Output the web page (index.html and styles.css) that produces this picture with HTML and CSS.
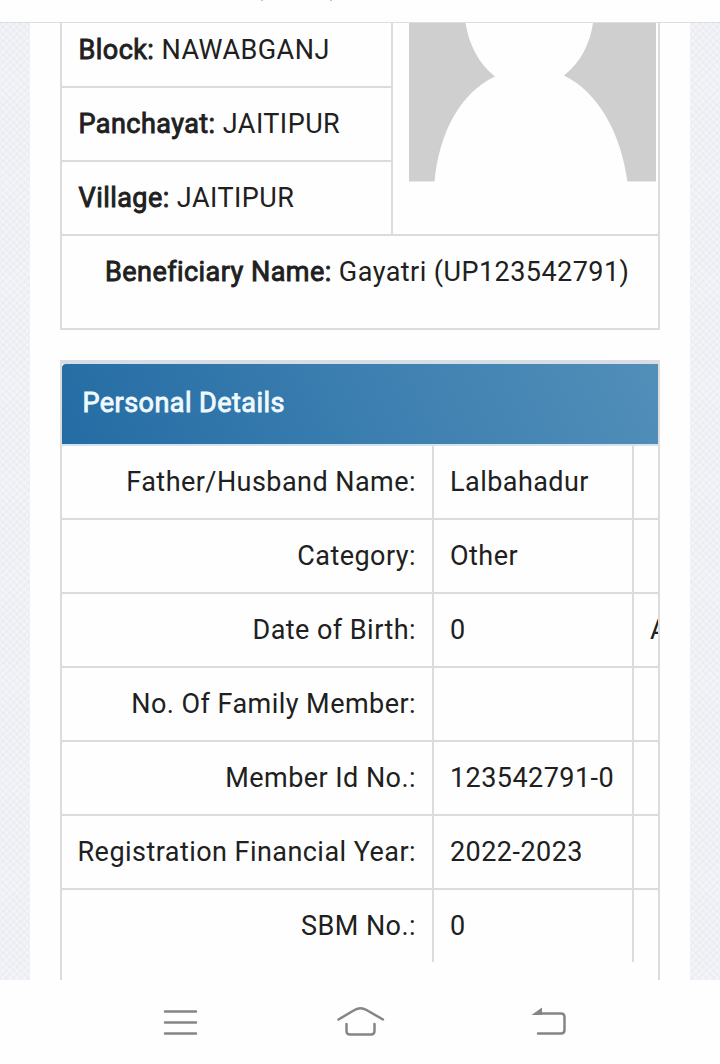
FILE: index.html
```html
<!DOCTYPE html>
<html lang="en">
<head>
<meta charset="utf-8">
<title>Beneficiary Details</title>
<link rel="stylesheet" href="styles.css">
</head>
<body>
<header class="topbar"><i class="speck"></i><i class="speck"></i></header>
<main class="page">
  <div class="sheet">
    <section class="summary">
      <div class="summary-top">
        <div class="location">
          <div class="location-row"><span><b>Block:</b> NAWABGANJ</span></div>
          <div class="location-row"><span><b>Panchayat:</b> JAITIPUR</span></div>
          <div class="location-row"><span><b>Village:</b> JAITIPUR</span></div>
        </div>
        <div class="photo">
          <svg width="247" height="159" viewBox="409 23 247 159">
            <rect x="409" y="23" width="247" height="158.500" fill="#cfcfcf"/>
            <path fill="#fefefe" d="M465.500 23C469 45 479 64 495 76.500C460 93 439 133 434.500 182H627.500C621 133 598 92 564 75.500C579 64 590 45 593 23Z"/>
          </svg>
        </div>
      </div>
      <div class="beneficiary"><span><b>Beneficiary Name:</b> Gayatri (UP123542791)</span></div>
    </section>
    <section class="details">
      <h2 class="details-head"><span>Personal Details</span></h2>
      <div class="row"><div class="label">Father/Husband Name:</div><div class="value">Lalbahadur</div><div class="extra"></div></div>
      <div class="row"><div class="label">Category:</div><div class="value">Other</div><div class="extra"></div></div>
      <div class="row"><div class="label">Date of Birth:</div><div class="value">0</div><div class="extra">A</div></div>
      <div class="row"><div class="label">No. Of Family Member:</div><div class="value"></div><div class="extra"></div></div>
      <div class="row"><div class="label">Member Id No.:</div><div class="value">123542791-0</div><div class="extra"></div></div>
      <div class="row"><div class="label">Registration Financial Year:</div><div class="value">2022-2023</div><div class="extra"></div></div>
      <div class="row"><div class="label">SBM No.:</div><div class="value">0</div><div class="extra"></div></div>
    </section>
  </div>
</main>
<nav class="navbar">
  <svg width="40" height="36" viewBox="160 1005 40 36" class="icon"><path d="M165 1011.500H196M165 1022.500H196M165 1033.500H196"/></svg>
  <svg width="56" height="36" viewBox="332 1005 56 36" class="icon"><path d="M338.500 1019.500L354.500 1010Q360.500 1006.500 366.500 1010L383 1019.500M346.500 1024V1031Q346.500 1034.500 350 1034.500H371Q374.500 1034.500 374.500 1031V1024"/></svg>
  <svg width="44" height="36" viewBox="528 1005 44 36" class="icon"><path d="M540 1013.500H561Q564.500 1013.500 564.500 1017V1030Q564.500 1033.500 561 1033.500H538"/><path class="arrow" d="M531.500 1015L542 1007.500V1015Z"/></svg>
</nav>
</body>
</html>
```
FILE: styles.css
```css
* { box-sizing: border-box; }
body {
  margin: 0;
  width: 720px;
  height: 1064px;
  overflow: hidden;
  display: flex;
  flex-direction: column;
  background: #fefefe;
  color: #202020;
  font: 27px/32px Roboto, sans-serif;
  letter-spacing: 0.45px;
}
.topbar {
  flex: none;
  height: 23px;
  padding-left: 261px;
  display: flex;
  gap: 67px;
  border-bottom: 1px solid #dedede;
}
.speck { width: 2px; height: 1px; background: #c4c4c4; }
.page {
  flex: none;
  height: 957px;
  padding: 0 30px;
  overflow: hidden;
  background:
    repeating-linear-gradient(45deg, rgba(226, 228, 236, 0.3) 0 2px, transparent 2px 5px),
    repeating-linear-gradient(-45deg, rgba(226, 228, 236, 0.3) 0 2px, transparent 2px 5px),
    #f3f4f8;
}
.sheet { height: 957px; padding: 0 30px; background: #fefefe; }
b, .details-head { font-weight: 400; -webkit-text-stroke: 0.9px currentColor; }
.summary {
  height: 307px;
  border: 2px solid #dcdcdc;
  border-top: 0;
}
.summary-top { display: flex; height: 213px; border-bottom: 2px solid #dcdcdc; }
.location { width: 331px; border-right: 2px solid #dcdcdc; }
.location-row {
  height: 74px;
  padding: 20px 0 0 16.5px;
  border-bottom: 2px solid #dcdcdc;
  white-space: nowrap;
}
.location-row:first-child { height: 65px; padding-top: 11px; }
.location-row:last-child { border-bottom: 0; }
.photo { padding-left: 16px; }
.photo svg { display: block; }
.beneficiary { padding: 20px 0 0 43px; white-space: nowrap; }
.details {
  height: 620px;
  margin-top: 30px;
  border: 2px solid #dcdcdc;
  border-width: 4px 2px 0;
  border-top-color: #d7dde2;
}
.details-head {
  height: 82px;
  margin: 0;
  padding: 23px 0 0 20.5px;
  border-bottom: 2px solid #d3e3ec;
  border-radius: 4px 0 0 0;
  background: linear-gradient(65deg, #246ca4, #3e80b1 55%, #528fb9);
  background-clip: padding-box;
  color: #effaff;
  font-size: 27px;
}
.row {
  display: grid;
  grid-template-columns: 372px 200px 24px;
  height: 74px;
  border-bottom: 2px solid #dcdcdc;
}
.row:last-child { height: 72px; border-bottom: 0; }
.label, .value { border-right: 2px solid #dcdcdc; white-space: nowrap; padding-top: 20px; }
.label { padding-right: 16px; text-align: right; }
.value { padding-left: 16px; }
.extra { padding: 20px 0 0 16px; overflow: hidden; }
.navbar {
  flex: none;
  height: 84px;
  display: flex;
  align-items: flex-start;
  padding: 25px 148px 0 160px;
}
.navbar .icon:nth-child(2) { margin: 0 140px 0 132px; }
.icon { fill: none; stroke: #858585; stroke-width: 2.500; stroke-linecap: round; }
.arrow { fill: #858585; stroke: none; }
```
